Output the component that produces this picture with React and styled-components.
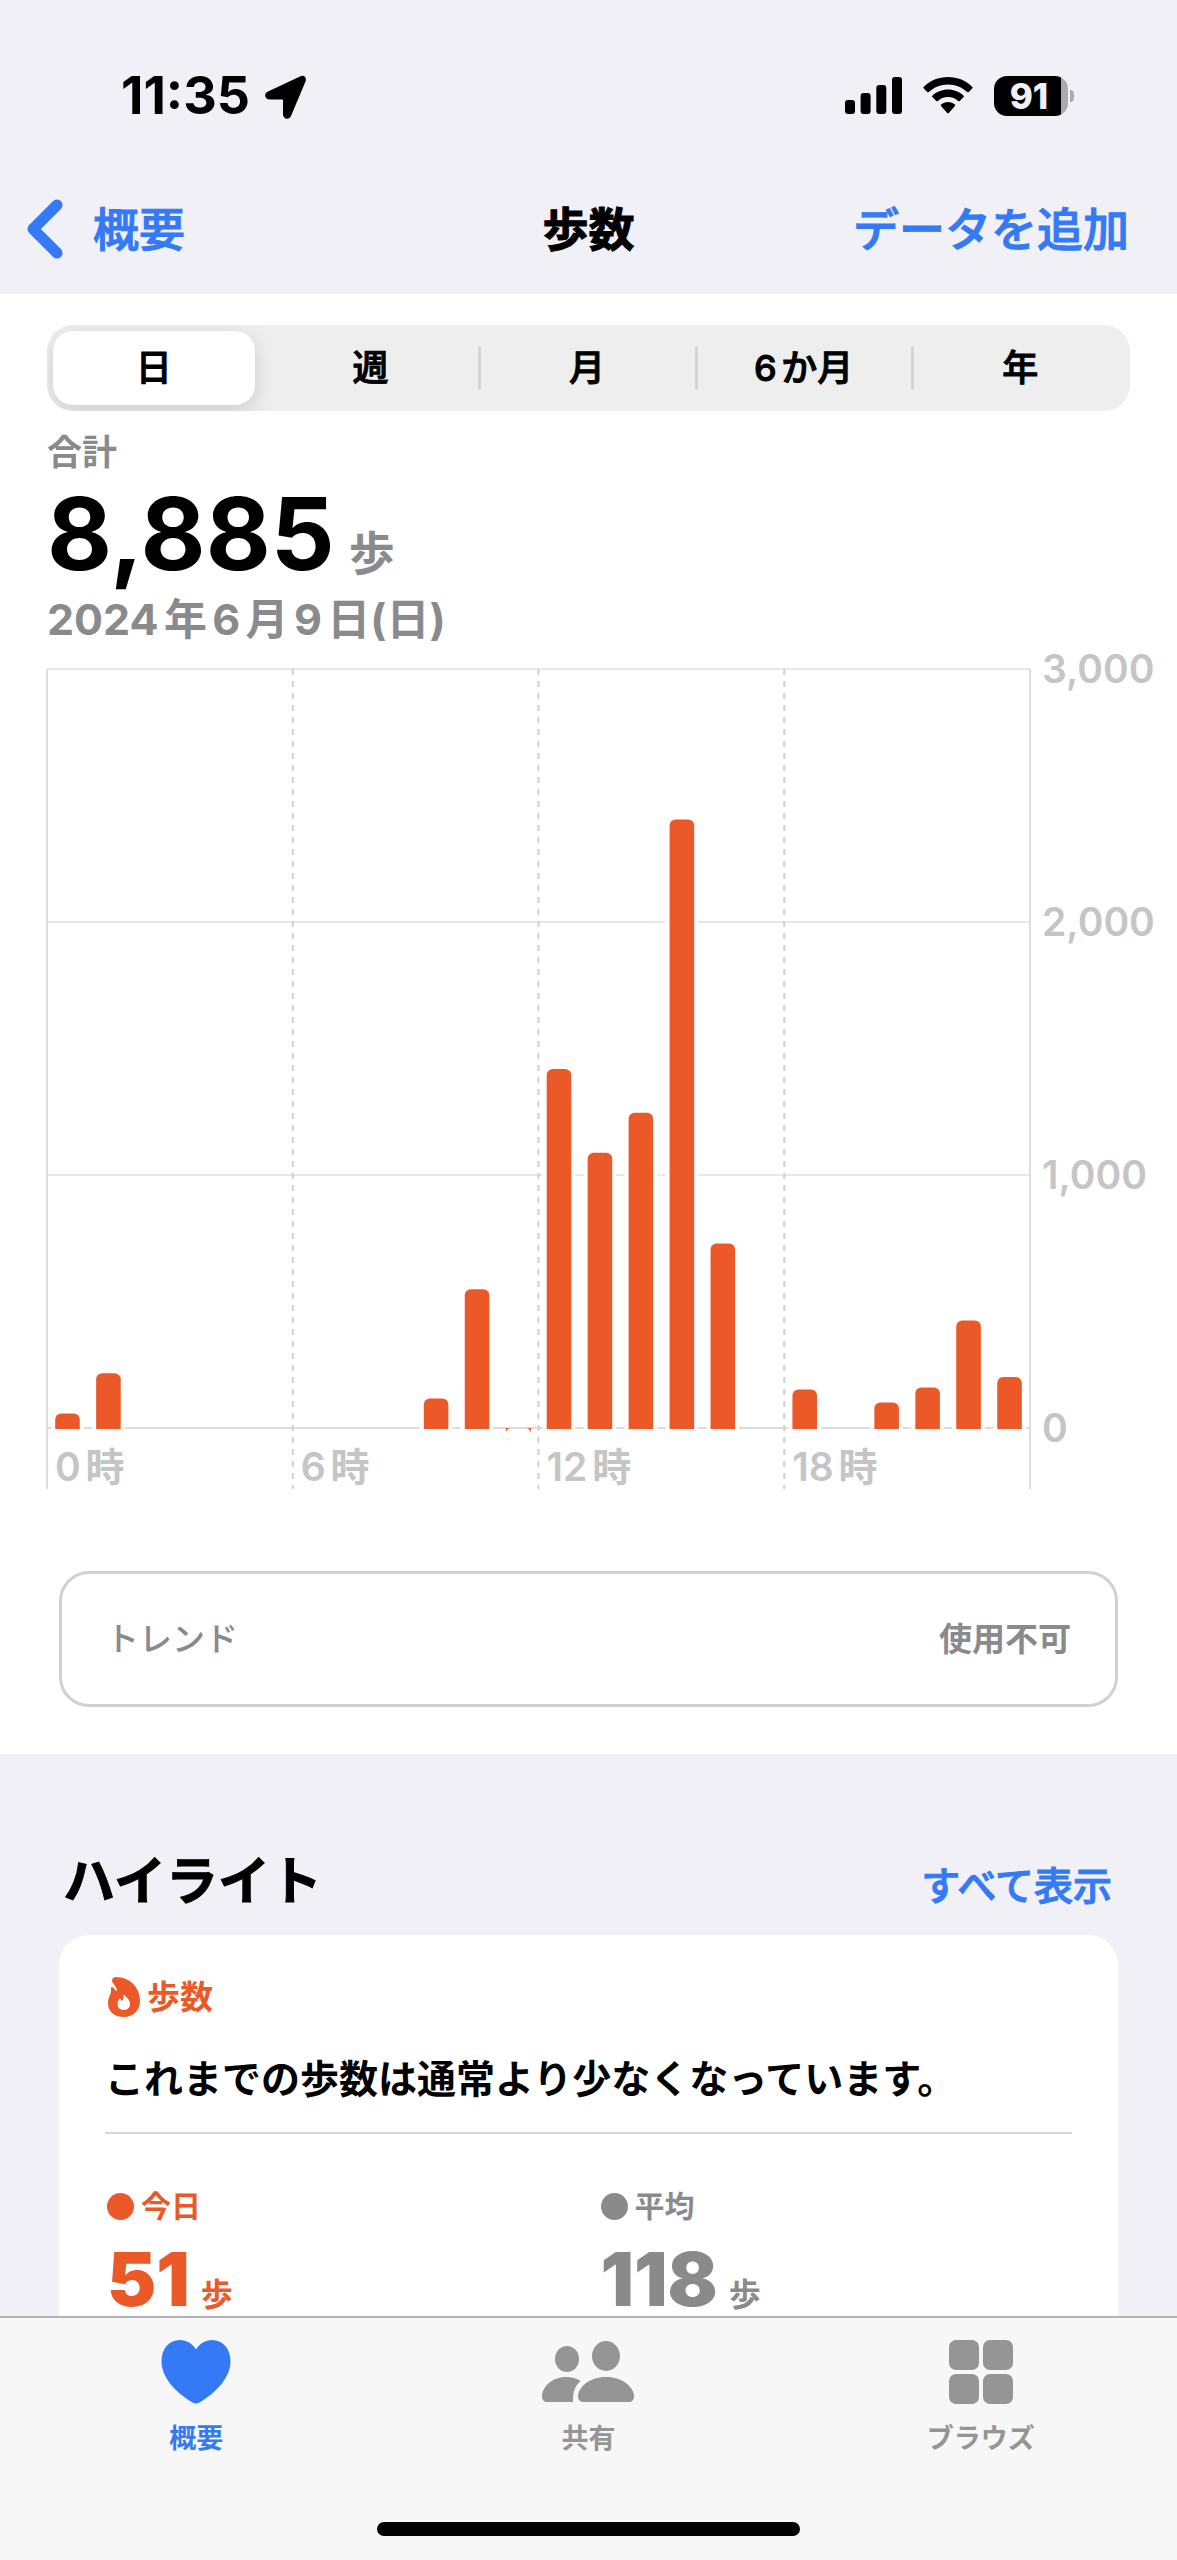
import React, { useState } from 'react';
import styled, { createGlobalStyle } from 'styled-components';

const blue = '#347af6';
const orange = '#eb5929';
const gray = '#8a8a8d';

const GlobalStyle = createGlobalStyle`
*, *::before, *::after {
box-sizing: border-box;
}
body {
margin: 0;
background: #f1f0f6;
color: #000;
font-family: "Inter", "Noto Sans CJK JP", sans-serif;
text-autospace: normal;
}
h1, h2, p, dl, dd, dt, ul {
margin: 0;
padding: 0;
font-weight: inherit;
}
a {
text-decoration: none;
}
button {
font-family: inherit;
color: inherit;
border: 0;
padding: 0;
background: none;
cursor: pointer;
}
svg {
display: block;
flex: none;
}
`

const Screen = styled.div`
min-height: 100vh;
display: flex;
flex-direction: column;
`

const StatusBar = styled.div`
height: 164px;
padding: 27px 103px 0 121px;
display: flex;
align-items: center;
justify-content: space-between;
`

const StatusGroup = styled.div`
display: flex;
align-items: center;
gap: ${props => props.$gap}px;
`

const Clock = styled.span`
font-size: 52px;
line-height: 56px;
font-weight: 700;
`

const Battery = styled.div`
display: flex;
align-items: center;
gap: 2px;
`

const BatteryBody = styled.div`
width: 74px;
height: 40px;
border-radius: 13px;
display: flex;
align-items: center;
justify-content: center;
padding-right: 4px;
background: linear-gradient(to right, #000 90%, #aaa9ae 90%);
color: #f1f0f6;
font-size: 35px;
line-height: 40px;
font-weight: 800;
`

const BatteryTip = styled.div`
width: 4px;
height: 12px;
border-radius: 0 6px 6px 0;
background: #aaa9ae;
`

const NavBar = styled.header`
height: 130px;
padding: 0 26px;
display: grid;
grid-template-columns: 1fr auto 1fr;
align-items: center;
font-size: 46px;
line-height: 60px;
`

const BackLink = styled.a`
display: flex;
align-items: center;
gap: 29px;
color: ${blue};
font-weight: 500;
-webkit-text-stroke: 1px;
`

const Title = styled.h1`
font-size: 46px;
font-weight: 700;
-webkit-text-stroke: 1px;
`

const AddButton = styled.button`
justify-self: end;
padding-right: 22px;
color: ${blue};
font-size: 46px;
line-height: 60px;
font-weight: 500;
-webkit-text-stroke: 1px;
`

const Summary = styled.section`
background: #fff;
padding: 31px 0 47px;
`

const Segments = styled.div`
margin: 0 47px;
height: 86px;
border-radius: 26px;
background: #eeeeee;
display: grid;
grid-template-columns: repeat(5, 1fr);
overflow: hidden;
`

const SegmentCell = styled.div`
display: flex;
align-items: center;

&::before {
content: "";
width: 3px;
height: 44px;
margin-left: -2px;
border-radius: 2px;
background: ${props => (props.$divided ? '#d5d5d7' : 'transparent')};
}
`

const Segment = styled.button`
flex: 1;
height: 74px;
margin: 0 9px 0 5px;
border-radius: 20px;
font-size: 36px;
line-height: 48px;
font-weight: 500;
-webkit-text-stroke: 1px;
${props => props.$active && `
background: #fff;
box-shadow: 0 6px 20px rgba(0, 0, 0, 0.14);
`}
`

const Total = styled.div`
padding: 15px 47px 0;
color: ${gray};
font-weight: 700;
`

const TotalLabel = styled.p`
font-size: 35px;
line-height: 52px;
`

const TotalValue = styled.p`
display: flex;
align-items: baseline;
gap: 14px;
height: 111px;
font-size: 46px;
line-height: 112px;

strong {
color: #000;
font-size: 100px;
font-weight: 700;
}
`

const TotalDate = styled.p`
font-size: 43px;
line-height: 60px;
`

const ChartArea = styled.div`
display: flex;
padding-left: 47px;
color: #c5c5c7;
font-size: 39px;
font-weight: 600;
`

const Plot = styled.svg`
flex: 1;
min-width: 0;
height: 840px;
overflow: visible;
`

const Scale = styled.div`
width: 147px;
height: 799px;
padding-left: 12px;
display: flex;
flex-direction: column;
justify-content: space-between;
line-height: 40px;
`

const TrendBox = styled.div`
margin: 82px 59px 0;
height: 136px;
padding: 0 44px;
border: 3px solid #d1d0d6;
border-radius: 30px;
display: flex;
align-items: center;
justify-content: space-between;
color: ${gray};
font-size: 33px;
line-height: 48px;
font-weight: 500;

strong {
font-weight: 700;
}
`

const Highlights = styled.section`
flex: 1;
display: flex;
flex-direction: column;
padding: 84px 59px 0;
`

const HighlightsHeader = styled.div`
display: flex;
align-items: baseline;
justify-content: space-between;
padding: 0 6px 0 4px;
height: 97px;
`

const HighlightsTitle = styled.h2`
font-size: 52px;
line-height: 88px;
font-weight: 700;
-webkit-text-stroke: 1px;
`

const ShowAll = styled.a`
color: ${blue};
font-size: 39px;
line-height: 56px;
font-weight: 500;
-webkit-text-stroke: 1px;
`

const Card = styled.article`
flex: 1;
padding: 42px 46px 0;
border-radius: 30px 30px 0 0;
background: #fff;
`

const CardKind = styled.p`
display: flex;
align-items: center;
gap: 7px;
padding-left: 3px;
color: ${orange};
font-size: 33px;
line-height: 40px;
font-weight: 700;
`

const CardText = styled.p`
padding: 34px 0 25px;
border-bottom: 2px solid #d6d6d8;
font-size: 39px;
line-height: 56px;
font-weight: 700;
`

const Stats = styled.dl`
display: grid;
grid-template-columns: 1fr 1fr;
column-gap: 24px;
padding: 52px 2px 0;
`

const Stat = styled.div`
color: ${props => props.$color};
font-weight: 700;
`

const StatLabel = styled.dt`
display: flex;
align-items: center;
gap: 7px;
font-size: 30px;
line-height: 40px;

&::before {
content: "";
width: 27px;
height: 27px;
border-radius: 50%;
background: currentColor;
}
`

const StatValue = styled.dd`
display: flex;
align-items: baseline;
gap: 11px;
height: 90px;
font-size: 32px;
line-height: 106px;

strong {
font-size: 74px;
}
`

const TabBar = styled.nav`
position: sticky;
bottom: 0;
border-top: 2px solid #b4b4b7;
background: #f7f7f7;
`

const Tabs = styled.div`
display: grid;
grid-template-columns: repeat(3, 1fr);
padding-top: 21px;
`

const Tab = styled.a`
display: flex;
flex-direction: column;
align-items: center;
gap: 14px;
color: ${props => (props.$active ? blue : '#959595')};
font-size: 27px;
line-height: 40px;
font-weight: 700;
`

const HomeIndicator = styled.div`
width: 36%;
height: 14px;
margin: 63px auto 24px;
border-radius: 7px;
background: #000;
`

const LocationIcon = () => (
    <svg width="42" height="48" viewBox="0 0 42 48" aria-hidden="true">
        <path d="M3 19.500L35 4.500C39 2.500 42 5.500 40.500 9.500L26 44C24.500 48 18 47.500 18 42.500V27.500H5C-.5 27.500-1.500 21.500 3 19.500Z" />
    </svg>
);

const SignalIcon = () => (
    <svg width="57" height="37" viewBox="0 0 57 37" aria-hidden="true">
        <rect x="0" y="23" width="10" height="14" rx="3" />
        <rect x="15.600" y="16" width="10" height="21" rx="3" />
        <rect x="31.300" y="8" width="10" height="29" rx="3" />
        <rect x="47" y="0" width="10" height="37" rx="3" />
    </svg>
);

const WifiIcon = () => (
    <svg width="50" height="37" viewBox="0 0 50 37" aria-hidden="true">
        <path d="M25 0C34.500 0 43.200 3.700 49.400 9.900Q50 10.600 49.400 11.300L45.800 15Q45 15.700 44.200 15C39.200 10.200 32.400 7.400 25 7.400S10.800 10.200 5.800 15Q5 15.700 4.200 15L.6 11.300Q0 10.600.6 9.900C6.800 3.700 15.500 0 25 0Z" />
        <path d="M25 12.600C31 12.600 36.500 14.900 40.600 18.700Q41.300 19.400 40.600 20.100L36.800 23.900Q36 24.600 35.200 23.900C32.500 21.500 29 20 25 20S17.500 21.500 14.800 23.900Q14 24.600 13.200 23.900L9.400 20.100Q8.700 19.400 9.400 18.700C13.500 14.900 19 12.600 25 12.600Z" />
        <path d="M25 25C27.600 25 30 26 31.900 27.600Q32.600 28.300 31.900 29L25.800 36Q25 36.800 24.200 36L18.100 29Q17.400 28.300 18.100 27.600C20 26 22.400 25 25 25Z" />
    </svg>
);

const ChevronIcon = () => (
    <svg width="38" height="60" viewBox="0 0 38 60" fill="none" stroke="currentColor" strokeWidth="11" strokeLinecap="round" strokeLinejoin="round" aria-hidden="true">
        <path d="M31 6L7 30L31 54" />
    </svg>
);

const FlameIcon = () => (
    <svg width="32" height="40" viewBox="0 0 32 40" fill="currentColor" fillRule="evenodd" aria-hidden="true">
        <path d="M4.500 5.500C3.200 3 4.800 0 8 0C21 .2 32 9.500 32 23.500C32 33.500 25.500 40 15.500 40C6.300 40 0 34.500 0 26C0 20.500 3 17.500 3 13.500V11.200C3 10 4.400 9.700 5.200 10.600L8.800 14.500C9.200 11 7 9 4.500 5.500ZM15.500 18.200C15.200 17.500 16.300 17.500 16.800 18.300C19 21 22 23 22 27C22 30.600 19.600 33 16 33C12.200 33 9.500 30.600 9.500 27.200C9.500 24.800 10.400 23.200 11.300 22C11.900 21.300 12.600 21.500 12.800 22.200L13.600 24.300C15.600 22.600 15.800 20.400 15.500 18.200Z" />
    </svg>
);

const HeartIcon = () => (
    <svg width="70" height="66" viewBox="0 0 70 66" fill="currentColor" aria-hidden="true">
        <path d="M35 10.500C38.500 4.500 44.500 1 51 1C61.500 1 69.500 9.500 69.500 22C69.500 38 56.500 52.500 38.500 63.500Q35 65.500 31.500 63.500C13.500 52.500 .5 38 .5 22C.5 9.500 8.500 1 19 1C25.500 1 31.500 4.500 35 10.500Z" />
    </svg>
);

const PeopleIcon = () => (
    <svg width="92" height="66" viewBox="0 0 92 66" fill="currentColor" aria-hidden="true">
        <ellipse cx="25" cy="20" rx="12" ry="13" />
        <ellipse cx="64" cy="17" rx="14" ry="15" />
        <path d="M24 38C30 38 35 39.500 38.500 42C33 47 30.500 53 31 63H6C2 63 0 61 0 57.500C0 48 10 38 24 38Z" />
        <path d="M64 38C81 38 92 48.500 92 57.500C92 61 90 63 86 63H42C38 63 36 61 36 57.500C36 48.500 47 38 64 38Z" />
    </svg>
);

const BrowseIcon = () => (
    <svg width="64" height="66" viewBox="0 0 64 66" fill="currentColor" aria-hidden="true">
        <rect x="0" y="1" width="30" height="30" rx="7" />
        <rect x="34" y="1" width="30" height="30" rx="7" />
        <rect x="0" y="35" width="30" height="30" rx="7" />
        <rect x="34" y="35" width="30" height="30" rx="7" />
    </svg>
);

const ranges = ['日', '週', '月', '6か月', '年'];

// steps per hour, 0:00 to 23:00
const steps = [
    57, 216, 0, 0, 0, 0, 0, 0, 0, 117, 548, 4,
    1419, 1088, 1246, 2405, 729, 0, 152, 0, 101, 160, 425, 202
];

const maxSteps = 3000;
const plotTop = 20;
const plotHeight = 759;
const baseline = plotTop + plotHeight;

const percent = (hour) => `${(hour * 100) / 24}%`;
const barHeight = (value) => (value / maxSteps) * plotHeight;

const StepsChart = () => (
    <ChartArea>
        <Plot role="img" aria-label="1時間ごとの歩数">
            {[0, 1000, 2000, 3000].map(value => (
                <line
                    key={value}
                    x1="0"
                    x2="100%"
                    y1={baseline - barHeight(value)}
                    y2={baseline - barHeight(value)}
                    stroke={value ? '#e8e8e9' : '#dcdcdd'}
                    strokeWidth="2"
                />
            ))}
            {[0, 6, 12, 18, 24].map(hour => (
                <line
                    key={hour}
                    x1={percent(hour)}
                    x2={percent(hour)}
                    y1={plotTop}
                    y2="840"
                    stroke={hour % 24 ? '#d0d0d2' : '#dededf'}
                    strokeWidth="2"
                    strokeDasharray={hour % 24 ? '6 6' : 'none'}
                />
            ))}
            <svg width="100%" height={baseline + 1}>
                {steps.map((value, hour) => value > 10 && (
                    <rect
                        key={hour}
                        x={percent(hour + 0.2)}
                        y={baseline - barHeight(value)}
                        width={percent(0.6)}
                        height={barHeight(value) + 12}
                        rx="6"
                        fill={orange}
                        stroke="#fff"
                        strokeWidth="8"
                        paintOrder="stroke"
                    />
                ))}
            </svg>
            {steps.map((value, hour) => value > 0 && value <= 10 && (
                <g key={hour} fill={orange}>
                    <svg x={percent(hour + 0.2)} y={baseline} width="4" height="5">
                        <path d="M0 5V0H4Q1 1 0 5Z" />
                    </svg>
                    <svg x={percent(hour + 0.72)} y={baseline} width="4" height="5">
                        <path d="M4 5V0H0Q3 1 4 5Z" />
                    </svg>
                </g>
            ))}
            {[0, 6, 12, 18].map(hour => (
                <text key={hour} x={percent(hour)} y="832" dx="8" fill="currentColor">{hour}時</text>
            ))}
        </Plot>
        <Scale>
            <span>3,000</span>
            <span>2,000</span>
            <span>1,000</span>
            <span>0</span>
        </Scale>
    </ChartArea>
);

const App = () => {
    const [range, setRange] = useState('日');

    return (
        <Screen>
            <GlobalStyle />
            <StatusBar>
                <StatusGroup $gap={15}>
                    <Clock>11:35</Clock>
                    <LocationIcon />
                </StatusGroup>
                <StatusGroup $gap={21}>
                    <SignalIcon />
                    <WifiIcon />
                    <Battery>
                        <BatteryBody>91</BatteryBody>
                        <BatteryTip />
                    </Battery>
                </StatusGroup>
            </StatusBar>
            <NavBar>
                <BackLink href="#summary"><ChevronIcon />概要</BackLink>
                <Title>歩数</Title>
                <AddButton type="button">データを追加</AddButton>
            </NavBar>
            <Summary>
                <Segments>
                    {ranges.map((name, i) => (
                        <SegmentCell key={name} $divided={i > 0 && range !== name && range !== ranges[i - 1]}>
                            <Segment
                                type="button"
                                $active={range === name}
                                aria-pressed={range === name}
                                onClick={() => setRange(name)}
                            >
                                {name}
                            </Segment>
                        </SegmentCell>
                    ))}
                </Segments>
                <Total>
                    <TotalLabel>合計</TotalLabel>
                    <TotalValue><strong>8,885</strong>歩</TotalValue>
                    <TotalDate>2024年6月9日(日)</TotalDate>
                </Total>
                <StepsChart />
                <TrendBox>
                    <span>トレンド</span>
                    <strong>使用不可</strong>
                </TrendBox>
            </Summary>
            <Highlights>
                <HighlightsHeader>
                    <HighlightsTitle>ハイライト</HighlightsTitle>
                    <ShowAll href="#highlights">すべて表示</ShowAll>
                </HighlightsHeader>
                <Card>
                    <CardKind><FlameIcon />歩数</CardKind>
                    <CardText>これまでの歩数は通常より少なくなっています。</CardText>
                    <Stats>
                        <Stat $color={orange}>
                            <StatLabel>今日</StatLabel>
                            <StatValue><strong>51</strong>歩</StatValue>
                        </Stat>
                        <Stat $color={gray}>
                            <StatLabel>平均</StatLabel>
                            <StatValue><strong>118</strong>歩</StatValue>
                        </Stat>
                    </Stats>
                </Card>
            </Highlights>
            <TabBar>
                <Tabs>
                    <Tab href="#summary" $active><HeartIcon />概要</Tab>
                    <Tab href="#sharing"><PeopleIcon />共有</Tab>
                    <Tab href="#browse"><BrowseIcon />ブラウズ</Tab>
                </Tabs>
                <HomeIndicator />
            </TabBar>
        </Screen>
    );
}


export default App;
